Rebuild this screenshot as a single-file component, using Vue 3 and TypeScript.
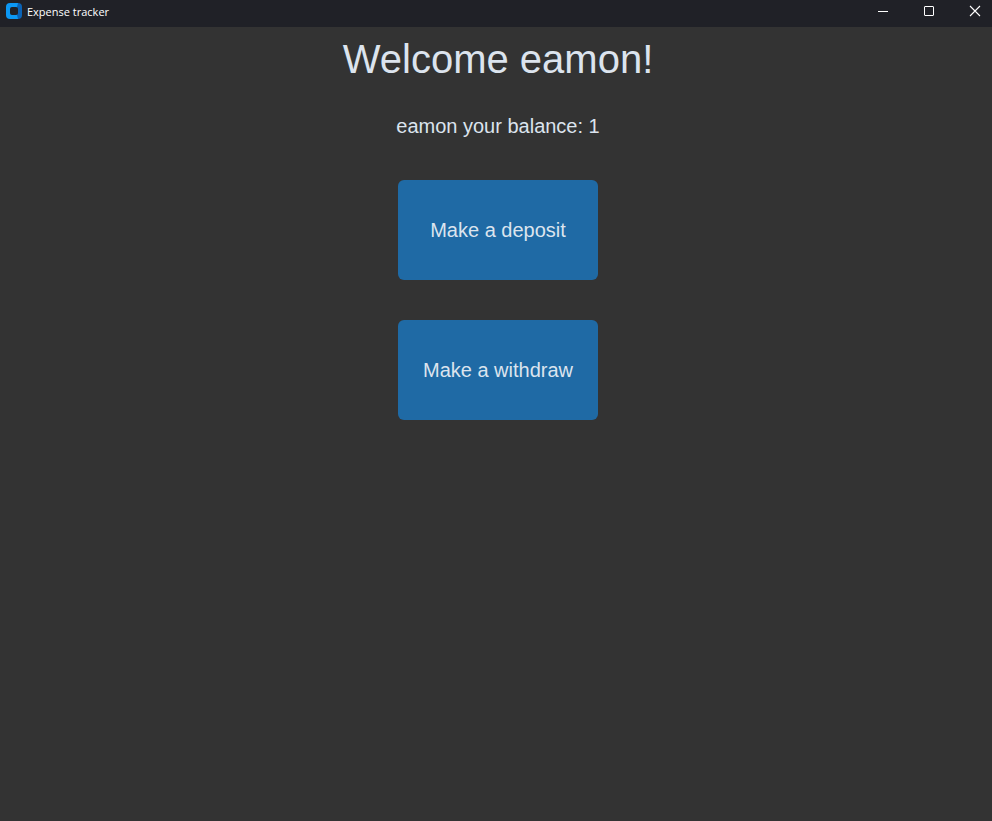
<script setup lang="ts">
import { ref } from 'vue'

const username = ref<string>('eamon')
const balance = ref<number>(1)
const actions: string[] = ['Make a deposit', 'Make a withdraw']
</script>

<template>
  <div class="window">
    <header class="titlebar">
      <svg class="logo" width="16" height="16" viewBox="0 0 16 16" aria-hidden="true">
        <path d="M4 0H12V16H4A4 4 0 0 1 0 12V4A4 4 0 0 1 4 0Z" fill="#0c98f5" />
        <path d="M12 0A4 4 0 0 1 16 4V12A4 4 0 0 1 12 16L11 12V4Z" fill="#0a62b5" />
        <rect x="4" y="4" width="8" height="8" rx="2" fill="#202127" />
      </svg>
      <span class="name">Expense tracker</span>
      <div class="controls">
        <button type="button" aria-label="Minimize">
          <svg width="12" height="12" viewBox="0 0 12 12">
            <path d="M1 6.5H11" stroke="#fff" fill="none" />
          </svg>
        </button>
        <button type="button" aria-label="Maximize">
          <svg width="12" height="12" viewBox="0 0 12 12">
            <rect x="1.5" y="1.5" width="9" height="9" rx="0.5" stroke="#fff" fill="none" />
          </svg>
        </button>
        <button type="button" aria-label="Close">
          <svg width="12" height="12" viewBox="0 0 12 12">
            <path d="M1 1L11 11M11 1L1 11" stroke="#fff" stroke-width="1.1" fill="none" />
          </svg>
        </button>
      </div>
    </header>
    <main class="content">
      <h1>Welcome {{ username }}!</h1>
      <p>{{ username }} your balance: {{ balance }}</p>
      <div class="actions">
        <button v-for="action in actions" :key="action" type="button">{{ action }}</button>
      </div>
    </main>
  </div>
</template>

<style>
body {
  background: #333333;
}
</style>

<style scoped>
.window {
  display: flex;
  flex-direction: column;
  min-height: 100vh;
  background: #333333;
  color: #dce4ee;
  font-family: "Liberation Sans", Arial, sans-serif;
}

.titlebar {
  display: flex;
  align-items: center;
  height: 27px;
  padding-left: 6px;
  background: #202127;
  color: #ffffff;
}

.logo {
  margin-bottom: 5px;
}

.name {
  margin-left: 5px;
  font: 11px/24px "Open Sans", "Noto Sans", sans-serif;
  padding-bottom: 3px;
}

.controls {
  display: flex;
  height: 100%;
  margin-left: auto;
}

.controls button {
  display: flex;
  align-items: center;
  justify-content: center;
  width: 46px;
  padding: 0 0 5px 12px;
  border: 0;
  background: transparent;
}

.content {
  display: flex;
  flex-direction: column;
  align-items: center;
  padding: 10px 0 20px 4px;
}

h1 {
  margin: 0;
  font-size: 40px;
  font-weight: 400;
  line-height: 44px;
}

p {
  margin: 32px 0 40px;
  font-size: 20px;
  line-height: 27px;
}

.actions {
  display: flex;
  flex-direction: column;
  gap: 40px;
}

.actions button {
  width: 200px;
  height: 100px;
  padding: 0;
  border: 0;
  border-radius: 6px;
  background: #1f6aa5;
  color: #dce4ee;
  font: inherit;
  font-size: 20px;
}
</style>
